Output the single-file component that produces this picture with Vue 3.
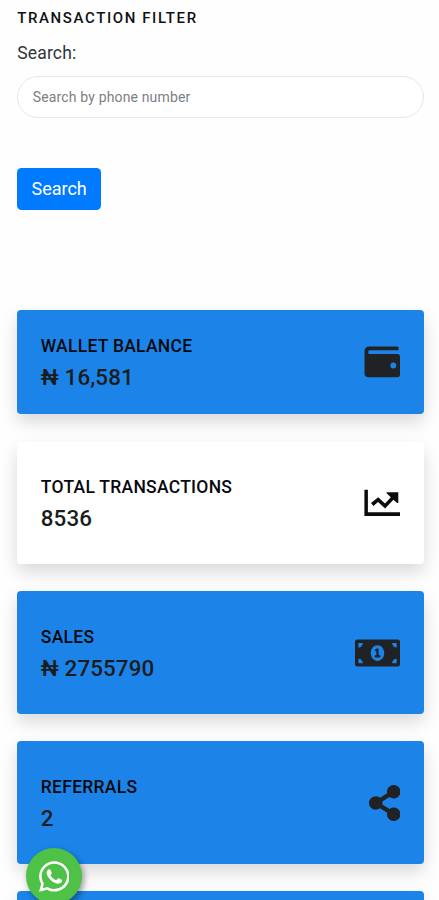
<script setup>
const icons = {
  wallet: {
    box: '0 0 36 36',
    d: 'M5 2.5H33.5Q34.5 2.5 34.5 4.3V6.3H6A1.9 1.9 0 0 0 6 10.1H33.3A2.7 2.7 0 0 1 36 12.8V30.5A2.7 2.7 0 0 1 33.3 33.2H4.5A4 4 0 0 1 .5 29.2V7A4.5 4.5 0 0 1 5 2.5ZM29.3 18.6A2.9 2.9 0 1 0 29.3 24.4 2.9 2.9 0 1 0 29.3 18.6Z',
  },
  chart: {
    box: '0 0 36 36',
    d: 'M.4 4.8H3.9V27.2H36V30.9H.4ZM7 18L14.2 12.2 21 18.4 26.8 12.3 22.6 8.2V7.2H34.3V18H33.2L29.4 14.8 21.1 23.6 14 17.1 9.4 20.9Z',
  },
  money: {
    box: '0 0 640 512',
    d: 'M352 288h-16v-88c0-4.42-3.58-8-8-8h-13.58c-4.74 0-9.38 1.4-13.31 4.03l-15.33 10.22a7.994 7.994 0 0 0-2.22 11.09l8.88 13.31a7.994 7.994 0 0 0 11.09 2.22l.47-.31V288h-16c-4.42 0-8 3.58-8 8v16c0 4.42 3.58 8 8 8h64c4.42 0 8-3.58 8-8v-16c0-4.42-3.58-8-8-8zM608 64H32C14.33 64 0 78.33 0 96v320c0 17.67 14.33 32 32 32h576c17.67 0 32-14.33 32-32V96c0-17.67-14.33-32-32-32zM48 400v-64c35.35 0 64 28.65 64 64H48zm0-224v-64h64c0 35.35-28.65 64-64 64zm272 192c-53.02 0-96-50.15-96-112 0-61.86 42.98-112 96-112s96 50.13 96 112c0 61.87-43 112-96 112zm272 32h-64c0-35.35 28.65-64 64-64v64zm0-224c-35.35 0-64-28.65-64-64h64v64z',
  },
  share: {
    box: '0 0 448 512',
    d: 'M352 320c-22.608 0-43.387 7.819-59.79 20.895l-102.486-64.054a96.551 96.551 0 0 0 0-41.683l102.486-64.054C308.613 184.181 329.392 192 352 192c53.019 0 96-42.981 96-96S405.019 0 352 0s-96 42.981-96 96c0 7.158.79 14.13 2.276 20.841L155.79 180.895C139.387 167.819 118.608 160 96 160c-53.019 0-96 42.981-96 96s42.981 96 96 96c22.608 0 43.387-7.819 59.79-20.895l102.486 64.054A96.301 96.301 0 0 0 256 416c0 53.019 42.981 96 96 96s96-42.981 96-96-42.981-96-96-96z',
  },
}

const cards = [
  { title: 'WALLET BALANCE', value: '₦ 16,581', icon: icons.wallet, kind: 'compact' },
  { title: 'TOTAL TRANSACTIONS', value: '8536', icon: icons.chart, kind: 'light' },
  { title: 'SALES', value: '₦ 2755790', icon: icons.money, kind: 'tall' },
  { title: 'REFERRALS', value: '2', icon: icons.share, kind: 'tall' },
]
</script>

<template>
  <main class="page">
    <form class="filter" @submit.prevent>
      <h1 class="heading">TRANSACTION FILTER</h1>
      <label class="label" for="phone">Search:</label>
      <input id="phone" class="field" type="text" placeholder="Search by phone number" />
      <button class="submit" type="submit">Search</button>
    </form>

    <section class="cards">
      <article v-for="card in cards" :key="card.title" class="card" :class="card.kind">
        <div class="info">
          <h2 class="title">{{ card.title }}</h2>
          <p class="value">{{ card.value }}</p>
        </div>
        <svg class="icon" :viewBox="card.icon.box" aria-hidden="true"><path fill-rule="evenodd" :d="card.icon.d" /></svg>
      </article>
      <article class="card"></article>
    </section>

    <a class="chat" href="#">
      <svg viewBox="0 0 448 512" aria-hidden="true">
        <path d="M380.9 97.1C339 55.1 283.2 32 223.9 32c-122.4 0-222 99.6-222 222 0 39.1 10.2 77.3 29.6 111L0 480l117.7-30.9c32.4 17.7 68.9 27 106.1 27h.1c122.3 0 224.1-99.6 224.1-222 0-59.3-25.2-115-67.1-157zm-157 341.6c-33.2 0-65.7-8.9-94-25.7l-6.7-4-69.8 18.3L72 359.2l-4.4-7c-18.5-29.4-28.2-63.3-28.2-98.2 0-101.7 82.8-184.5 184.6-184.5 49.3 0 95.6 19.2 130.4 54.1 34.8 34.9 56.2 81.2 56.1 130.5 0 101.8-84.9 184.6-186.6 184.6zm101.2-138.2c-5.5-2.8-32.8-16.2-37.9-18-5.1-1.9-8.8-2.8-12.5 2.8-3.7 5.6-14.3 18-17.6 21.8-3.2 3.7-6.5 4.2-12 1.4-32.6-16.3-54-29.1-75.5-66-5.7-9.8 5.7-9.1 16.3-30.3 1.8-3.7.9-6.9-.5-9.7-1.4-2.8-12.5-30.1-17.1-41.2-4.5-10.8-9.1-9.3-12.5-9.5-3.2-.2-6.9-.2-10.6-.2-3.7 0-9.7 1.4-14.8 6.9-5.1 5.6-19.4 19-19.4 46.3 0 27.3 19.9 53.7 22.6 57.4 2.8 3.7 39.1 59.7 94.8 83.8 35.2 15.2 49 16.5 66.6 13.9 10.7-1.6 32.8-13.4 37.4-26.4 4.6-13 4.6-24.1 3.2-26.4-1.3-2.5-5-3.9-10.5-6.6z" />
      </svg>
    </a>
  </main>
</template>

<style>
body {
  background: #fefefe;
}
</style>

<style scoped>
.page {
  position: relative;
  box-sizing: border-box;
  height: 900px;
  overflow: hidden;
  padding: 8px 15.5px 0 17.3px;
  font-family: Roboto, sans-serif;
  color: #212529;
}
.filter {
  display: flex;
  flex-direction: column;
  align-items: flex-start;
  height: 302px;
}
.heading {
  margin: 0;
  font-size: 15px;
  line-height: 21px;
  font-weight: 500;
  letter-spacing: 1.6px;
  color: #111;
}
.label {
  margin-top: 12px;
  font-size: 17.5px;
  line-height: 24px;
  letter-spacing: 0.15px;
  color: #30353a;
}
.field {
  box-sizing: border-box;
  width: 100%;
  height: 42px;
  margin: 11px 0 0;
  padding: 0 14.5px;
  border: 1px solid #e7e7e7;
  border-radius: 21px;
  background: #fff;
  font: 14px Roboto, sans-serif;
  letter-spacing: 0.15px;
  outline: none;
}
.field::placeholder {
  color: #7b8085;
  opacity: 1;
}
.submit {
  width: 83.7px;
  height: 42px;
  margin: 49.5px 0 0;
  padding: 0 0 1px;
  border: 0;
  border-radius: 4.5px;
  background: #007bff;
  color: #fff;
  font: 18px Roboto, sans-serif;
}
.cards {
  display: flex;
  flex-direction: column;
  gap: 27.5px;
}
.card {
  display: flex;
  flex: none;
  align-items: center;
  justify-content: space-between;
  box-sizing: border-box;
  height: 122.5px;
  padding: 0 23.5px;
  border-radius: 4px;
  background: #1c84e8;
  box-shadow: 0 8px 17px rgba(0, 0, 0, 0.15);
}
.card.compact {
  height: 104px;
}
.card.light {
  height: 122px;
  background: #fff;
}
.card.tall {
  padding-top: 1px;
}
.info {
  padding-top: 2px;
}
.title {
  margin: 0;
  font-size: 17.5px;
  line-height: 24px;
  font-weight: 500;
  letter-spacing: 0.27px;
  color: #08090c;
}
.value {
  margin: 4px 0 0;
  font-size: 22.4px;
  line-height: 30px;
  font-weight: 500;
  letter-spacing: 0.1px;
  color: #191d20;
}
.icon {
  height: 36px;
  width: auto;
  fill: #202226;
}
.light .icon {
  fill: #0c0c0c;
}
.chat {
  position: absolute;
  left: 26px;
  top: 848px;
  display: flex;
  align-items: center;
  justify-content: center;
  width: 56px;
  height: 56px;
  border-radius: 50%;
  background: #4dc247;
  box-shadow: 2px 3px 6px rgba(0, 0, 0, 0.4);
}
.chat svg {
  height: 35px;
  fill: #fff;
}
</style>
